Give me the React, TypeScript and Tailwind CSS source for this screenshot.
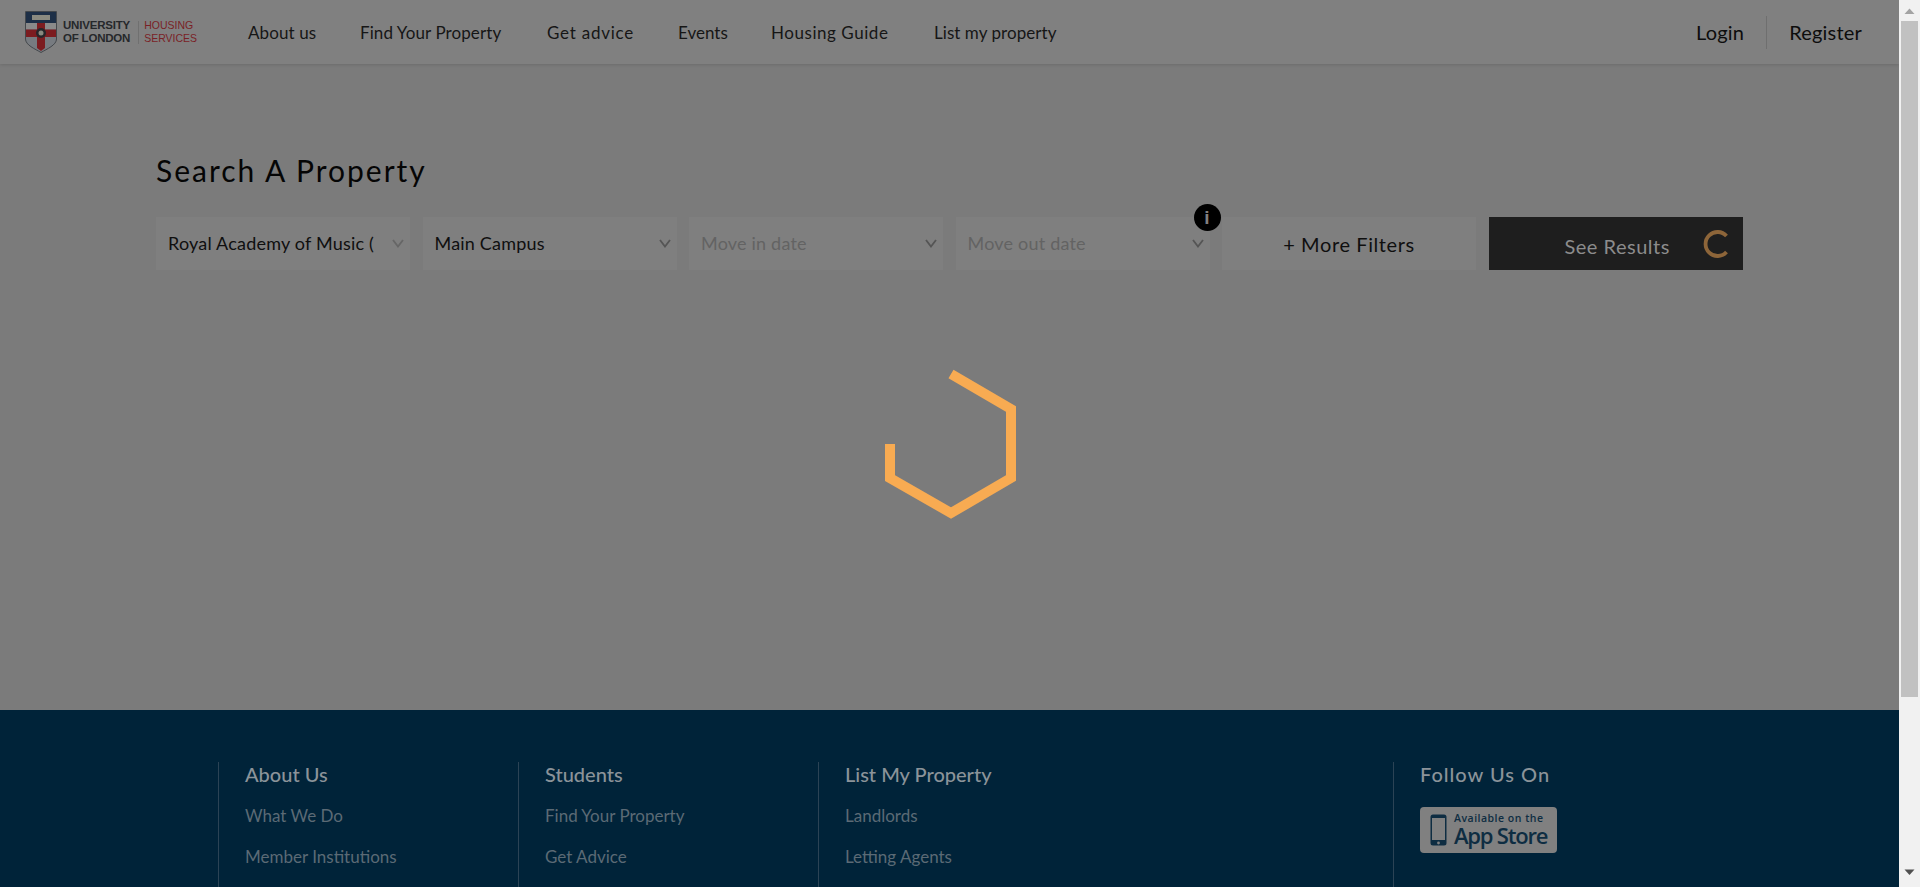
const navLinks = [
  { label: 'About us', width: 'w-[112px]', spacing: 'tracking-[0.1px]' },
  { label: 'Find Your Property', width: 'w-[187px]', spacing: 'tracking-[0.1px]' },
  { label: 'Get advice', width: 'w-[131px]', spacing: 'tracking-[0.75px]' },
  { label: 'Events', width: 'w-[93px]', spacing: 'tracking-[0px]' },
  { label: 'Housing Guide', width: 'w-[163px]', spacing: 'tracking-[0.55px]' },
  { label: 'List my property', width: 'w-auto', spacing: 'tracking-[0.05px]' },
];

const filters = [
  { label: 'Royal Academy of Music (', placeholder: false, chevron: 'text-[#666666]' },
  { label: 'Main Campus', placeholder: false, chevron: 'text-[#555555]' },
  { label: 'Move in date', placeholder: true, chevron: 'text-[#555555]' },
  { label: 'Move out date', placeholder: true, chevron: 'text-[#555555]' },
];

const footerColumns = [
  { title: 'About Us', links: ['What We Do', 'Member Institutions'], width: 'w-[300px]' },
  { title: 'Students', links: ['Find Your Property', 'Get Advice'], width: 'w-[300px]' },
  { title: 'List My Property', links: ['Landlords', 'Letting Agents'], width: 'w-[575px]' },
];

function Shield() {
  return (
    <svg width="32" height="42" viewBox="0 0 32 42" className="shrink-0">
      <path d="M0.5 0.5H31.5V28C31.5 34 22 38 16 41.5C10 38 0.5 34 0.5 28Z" fill="#777b80" stroke="#44484c" />
      <path d="M1 1H31V12H1Z" fill="#1d2f47" />
      <path d="M7 4H25V9H7Z" fill="#8a8a80" />
      <path d="M1 12H31V18H1Z" fill="#8a8a8a" />
      <path d="M12 12H20V37L16 40L12 37Z" fill="#7c1c20" />
      <path d="M1 18.5H31V26H1Z" fill="#7c1c20" />
      <circle cx="16" cy="22" r="5" fill="#26262a" />
      <circle cx="16" cy="22" r="2.5" fill="#8a8a80" />
    </svg>
  );
}

function Chevron({ className }: { className: string }) {
  return (
    <svg width="12" height="9" viewBox="0 0 12 9" className={className}>
      <path d="M1 1L6 7.5L11 1" fill="none" stroke="currentColor" strokeWidth="1.8" />
    </svg>
  );
}

function Scrollbar() {
  return (
    <div className="flex w-[21px] shrink-0 flex-col items-center bg-[#f1f1f1]">
      <svg width="11" height="7" viewBox="0 0 11 7" className="mt-[8px]">
        <path d="M5.5 0.5L10.5 6H0.5Z" fill="#a3a3a3" />
      </svg>
      <div className="mt-[6px] h-[676px] w-[17px] bg-[#c1c1c1]" />
      <svg width="11" height="7" viewBox="0 0 11 7" className="mt-[172px]">
        <path d="M0.5 0.5H10.5L5.5 6Z" fill="#505050" />
      </svg>
    </div>
  );
}

export default function App() {
  return (
    <div className="flex h-[887px] w-[1920px] overflow-hidden bg-[#7b7b7b] font-['Lato',sans-serif]">
      <div className="flex w-[1899px] shrink-0 flex-col">
        <header className="flex h-[64px] shrink-0 items-center bg-[#808080] pl-[25px] pr-[37px] shadow-[0_1px_3px_rgba(0,0,0,0.12)]">
          <div className="flex w-[223px] shrink-0 items-center">
            <Shield />
            <div className="ml-[6px] text-[11.5px] font-bold leading-[13px] text-[#26282b] font-['Liberation_Sans',sans-serif] tracking-[-0.2px]">
              <div>UNIVERSITY</div>
              <div>OF LONDON</div>
            </div>
            <div className="ml-[8px] h-[23px] w-px bg-[#707070]" />
            <div className="ml-[5px] text-[10.5px] leading-[13px] text-[#7a1f26] font-['Liberation_Sans',sans-serif]">
              <div>HOUSING</div>
              <div>SERVICES</div>
            </div>
          </div>
          <nav className="flex flex-1 items-center pt-[1px] text-[17px] text-[#161616]">
            {navLinks.map((link) => (
              <a key={link.label} className={`${link.width} ${link.spacing} block whitespace-nowrap`}>
                {link.label}
              </a>
            ))}
          </nav>
          <div className="flex items-center text-[20px] tracking-[0.2px] text-[#0d0d0d]">
            <a>Login</a>
            <div className="mx-[22px] h-[33px] w-px bg-[#6f6f6f]" />
            <a>Register</a>
          </div>
        </header>

        <main className="flex h-[646px] shrink-0 flex-col pl-[156px]">
          <h1 className="mt-[85px] text-[30px] leading-[42px] tracking-[2px] text-[#050505]">Search A Property</h1>
          <div className="mt-[26px] flex w-[1587px] items-stretch">
            {filters.map((filter, i) => (
              <div
                key={filter.label}
                className="relative mr-[12.5px] flex h-[53px] w-[254px] shrink-0 items-center justify-between bg-[#7f7f7f] pl-[12px] pr-[6px]"
              >
                <span
                  className={
                    filter.placeholder
                      ? 'text-[18px] tracking-[0.2px] text-[#636363]'
                      : 'text-[18px] tracking-[0.2px] text-[#0f0f0f]'
                  }
                >
                  {filter.label}
                </span>
                <Chevron className={filter.chevron} />
                {i === 3 && (
                  <span className="absolute -right-[11px] -top-[13px] flex h-[27px] w-[27px] items-center justify-center rounded-full bg-black text-[19px] font-bold leading-none text-[#808080] font-['Liberation_Sans',sans-serif]">
                    i
                  </span>
                )}
              </div>
            ))}
            <button className="mr-[12.5px] flex h-[53px] w-[254px] shrink-0 items-center justify-center bg-[#7f7f7f] text-[20px] tracking-[0.6px] text-[#0f0f0f]">
              + More Filters
            </button>
            <button className="flex h-[53px] w-[254px] shrink-0 items-center bg-[#1e1e1e] pl-[76px] text-[20px] tracking-[0.5px] text-[#8c8c8c]">
              <span className="mt-[5px]">See Results</span>
              <svg width="28" height="28" viewBox="0 0 28 28" className="ml-[33px] mt-[1px]">
                <path d="M23.5 6A12 12 0 1 0 23.5 22" fill="none" stroke="#8d6539" strokeWidth="3.8" />
              </svg>
            </button>
          </div>
          <div className="ml-[724px] mt-[99px]">
            <svg width="140" height="150" viewBox="0 0 140 150">
              <path
                d="M71 5L131 40V109L71 144L10 109V75"
                fill="none"
                stroke="#f8ab52"
                strokeWidth="10"
                strokeLinejoin="miter"
              />
            </svg>
          </div>
        </main>

        <footer className="flex flex-1 items-start bg-[#002339] pl-[218px] pt-[52px]">
          {footerColumns.map((col) => (
            <div key={col.title} className={`${col.width} h-[200px] shrink-0 border-l border-[#2b4355] pl-[26px]`}>
              <h3 className="-mt-[1px] text-[20px] font-medium leading-[26px] text-[#8b9399]">{col.title}</h3>
              <ul className="mt-[16px] flex flex-col gap-[15px] text-[17px] leading-[26px] text-[#5b6a75]">
                {col.links.map((link) => (
                  <li key={link}>{link}</li>
                ))}
              </ul>
            </div>
          ))}
          <div className="h-[200px] shrink-0 border-l border-[#2b4355] pl-[26px]">
            <h3 className="-mt-[1px] text-[20px] font-medium leading-[26px] tracking-[1px] text-[#8b9399]">Follow Us On</h3>
            <div className="mt-[20px] flex h-[46px] w-[137px] items-center rounded-[4px] bg-[#808080] pl-[10px] text-[#0e2d42]">
              <svg width="17" height="32" viewBox="0 0 17 32" className="shrink-0">
                <rect x="0.5" y="0.5" width="16" height="31" rx="2.5" fill="#0e2d42" />
                <rect x="2" y="4" width="13" height="22" fill="#808080" />
                <circle cx="8.5" cy="29" r="1.4" fill="#808080" />
              </svg>
              <div className="ml-[7px] font-['Open_Sans',sans-serif]">
                <div className="text-[10.5px] font-semibold leading-[11px] tracking-[0.5px] whitespace-nowrap">Available on the</div>
                <div className="text-[22px] font-semibold leading-[23px] tracking-[-1.2px] whitespace-nowrap">App Store</div>
              </div>
            </div>
          </div>
        </footer>
      </div>
      <Scrollbar />
    </div>
  );
}
